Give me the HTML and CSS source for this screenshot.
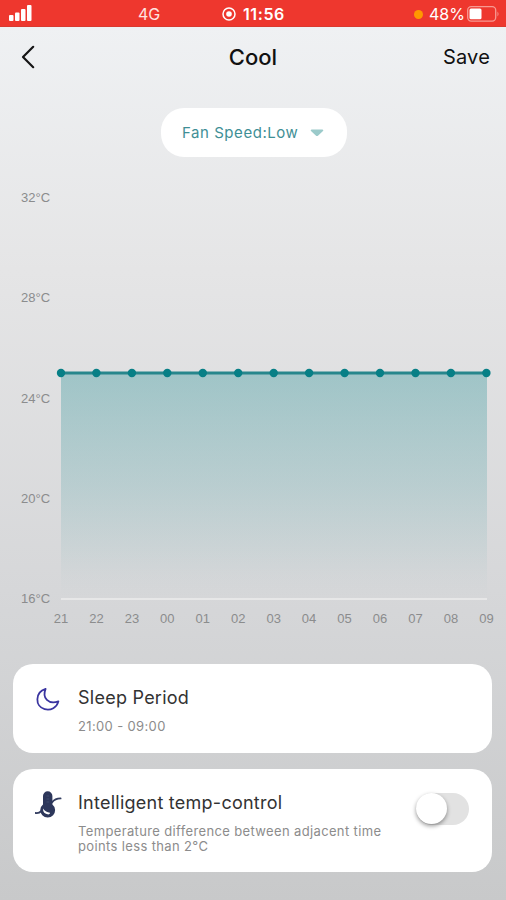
FILE: index.html
```
<!DOCTYPE html>
<html lang="en">
<head>
  <meta charset="UTF-8">
  <title>Cool</title>
  <link rel="stylesheet" href="styles.css">
</head>
<body>
  <div class="status-bar">
    <svg class="signal" width="24" height="16" viewBox="0 0 24 16" fill="#fff">
      <rect x="0" y="10" width="4.5" height="6" rx="1"/>
      <rect x="6" y="7.5" width="4.5" height="8.5" rx="1"/>
      <rect x="12" y="4" width="4.5" height="12" rx="1"/>
      <rect x="18" y="0" width="4.5" height="16" rx="1"/>
    </svg>
    <span class="network">4G</span>
    <div class="clock">
      <svg width="14" height="14" viewBox="0 0 14 14">
        <circle cx="7" cy="7" r="6" fill="none" stroke="#fff" stroke-width="1.5"/>
        <circle cx="7" cy="7" r="2.8" fill="#fff"/>
      </svg>
      <span>11:56</span>
    </div>
    <div class="power">
      <span class="mic-dot"></span>
      <span class="percent">48%</span>
      <svg width="33" height="16" viewBox="0 0 33 16">
        <rect x="0.7" y="0.7" width="28" height="14.4" rx="3.5" fill="none" stroke="#f79a93" stroke-width="1.3"/>
        <rect x="2.5" y="2.5" width="12" height="10.8" rx="1.5" fill="#fff"/>
        <path d="M30.5 5.5 Q32.5 8 30.5 10.5 Z" fill="#f79a93"/>
      </svg>
    </div>
  </div>

  <div class="header">
    <svg class="back" width="14" height="24" viewBox="0 0 14 24">
      <path d="M12.2 1.8 L2 12 L12.2 22.2" fill="none" stroke="#151515" stroke-width="2.2" stroke-linecap="round" stroke-linejoin="round"/>
    </svg>
    <span class="title">Cool</span>
    <span class="save">Save</span>
  </div>

  <div class="fan-speed">
    <span>Fan Speed:Low</span>
    <svg width="14" height="8" viewBox="0 0 14 8">
      <path d="M1.5 0.5 H12.5 Q14 1 13 2 L8.2 6.6 Q7 7.6 5.8 6.6 L1 2 Q0 1 1.5 0.5 Z" fill="#9bcaca"/>
    </svg>
  </div>

  <svg class="chart" width="506" height="460" viewBox="0 180 506 460">
    <defs>
      <linearGradient id="fill" x1="0" y1="0" x2="0" y2="1">
        <stop offset="0" stop-color="#088389" stop-opacity="0.3"/>
        <stop offset="0.5" stop-color="#088389" stop-opacity="0.16"/>
        <stop offset="0.9" stop-color="#088389" stop-opacity="0.02"/>
        <stop offset="1" stop-color="#088389" stop-opacity="0"/>
      </linearGradient>
    </defs>
    <g class="temps">
      <text x="21" y="201.5">32°C</text>
      <text x="21" y="302">28°C</text>
      <text x="21" y="402.5">24°C</text>
      <text x="21" y="503">20°C</text>
      <text x="21" y="603">16°C</text>
    </g>
    <rect x="61" y="373" width="426" height="225" fill="url(#fill)"/>
    <path d="M61 599 H487" stroke="#eceded" stroke-width="1.5"/>
    <path d="M61 373 H487" stroke="#27868c" stroke-width="3"/>
    <g fill="#077f86">
      <circle cx="61" cy="373" r="4.2"/>
      <circle cx="96.4" cy="373" r="4.2"/>
      <circle cx="131.9" cy="373" r="4.2"/>
      <circle cx="167.3" cy="373" r="4.2"/>
      <circle cx="202.8" cy="373" r="4.2"/>
      <circle cx="238.2" cy="373" r="4.2"/>
      <circle cx="273.7" cy="373" r="4.2"/>
      <circle cx="309.1" cy="373" r="4.2"/>
      <circle cx="344.6" cy="373" r="4.2"/>
      <circle cx="380" cy="373" r="4.2"/>
      <circle cx="415.5" cy="373" r="4.2"/>
      <circle cx="450.9" cy="373" r="4.2"/>
      <circle cx="486.4" cy="373" r="4.2"/>
    </g>
    <g class="hours">
      <text x="61" y="622.5">21</text>
      <text x="96.4" y="622.5">22</text>
      <text x="131.9" y="622.5">23</text>
      <text x="167.3" y="622.5">00</text>
      <text x="202.8" y="622.5">01</text>
      <text x="238.2" y="622.5">02</text>
      <text x="273.7" y="622.5">03</text>
      <text x="309.1" y="622.5">04</text>
      <text x="344.6" y="622.5">05</text>
      <text x="380" y="622.5">06</text>
      <text x="415.5" y="622.5">07</text>
      <text x="450.9" y="622.5">08</text>
      <text x="486.4" y="622.5">09</text>
    </g>
  </svg>

  <div class="cards">
    <div class="card sleep">
      <svg class="icon" width="28" height="28" viewBox="0 0 28 28">
        <path d="M9.6 3.8 C-1.2 7 -1.2 21.6 8.6 24.2 C15 25.8 20.8 22.6 22.4 16.4 C12.6 19.8 5.8 13.2 9.6 3.8 Z" fill="none" stroke="#3a35a0" stroke-width="1.8" stroke-linejoin="round"/>
      </svg>
      <div class="text">
        <div class="name">Sleep Period</div>
        <div class="detail">21:00 - 09:00</div>
      </div>
    </div>

    <div class="card smart">
      <svg class="icon" width="28" height="28" viewBox="0 0 28 28">
        <path d="M0.6 23 Q3.8 23.6 6.4 21 M17 12.4 Q20 8.4 25.6 8.4" fill="none" stroke="#333d60" stroke-width="1.8" stroke-linecap="round"/>
        <path d="M8 6 A4.7 4.7 0 0 1 17.4 6 V14.4 A7.4 7.4 0 1 1 8 14.4 Z" fill="#2d375b"/>
        <path d="M11.5 6 H14.2 M11.5 9 H14.2 M11.5 12 H14.2" stroke="#414c6e" stroke-width="1"/>
        <path d="M8 18.6 Q7.8 24 13.4 24.4 Q15.4 24 15 22.8 Q10.6 22.4 8 18.6 Z" fill="#fff"/>
      </svg>
      <div class="text">
        <div class="name">Intelligent temp-control</div>
        <div class="detail">Temperature difference between adjacent time<br>points less than 2°C</div>
      </div>
      <div class="toggle"><div class="knob"></div></div>
    </div>
  </div>
</body>
</html>
```
FILE: styles.css
```
* {
  box-sizing: border-box;
}

body {
  margin: 0;
  height: 900px;
  overflow: hidden;
  font-family: Inter, "Liberation Sans", sans-serif;
  background: linear-gradient(#eff1f3 27px, #e5e5e6 270px, #d6d7d9 590px, #c8c9ca 900px);
}

.status-bar {
  height: 27px;
  display: grid;
  grid-template-columns: 138px 84px 192px 1fr;
  align-items: center;
  background: #ee372e;
  border-bottom: 1px solid #da392f;
  color: #fff;
  font-size: 16px;
  line-height: 20px;
}

.signal {
  margin-left: 9px;
}

.network {
  color: #ffe3e0;
  padding-top: 2px;
}

.clock,
.power {
  display: flex;
  align-items: center;
  padding-top: 2px;
}

.clock {
  gap: 7px;
  font-weight: 600;
  letter-spacing: 0.6px;
}

.mic-dot {
  width: 9px;
  height: 9px;
  border-radius: 50%;
  background: #ff9800;
  margin-right: 6px;
}

.percent {
  width: 35px;
  margin-right: 3px;
}

.header {
  height: 60px;
  padding: 0 16px 0 21px;
  display: grid;
  grid-template-columns: 1fr auto 1fr;
  align-items: center;
  color: #111;
}

.title {
  font-size: 22px;
  font-weight: 450;
  margin-right: 5px;
}

.save {
  font-size: 20px;
  letter-spacing: 0.2px;
  text-align: right;
}

.fan-speed {
  width: 186px;
  height: 49px;
  margin: 21px 0 0 161px;
  padding-left: 21px;
  display: flex;
  align-items: center;
  gap: 12px;
  border-radius: 23px;
  background: #fff;
  color: #3f8f96;
  font-size: 15px;
  letter-spacing: 0.55px;
}

.chart {
  display: block;
  margin-top: 23px;
  font-family: "Liberation Sans", Arial, sans-serif;
  font-size: 13px;
  fill: #8b8c8d;
}

.hours {
  text-anchor: middle;
}

.cards {
  display: flex;
  flex-direction: column;
  gap: 16px;
  padding: 24px 14px 0 13px;
}

.card {
  display: flex;
  border-radius: 20px;
  background: #fff;
}

.sleep {
  height: 89px;
  padding: 21px 23px 0;
}

.smart {
  height: 103px;
  padding: 21px 23px 0 22px;
}

.icon {
  flex: none;
}

.text {
  margin: 1px 0 0 14px;
}

.smart .text {
  margin-left: 15px;
}

.name {
  color: #333;
  font-size: 18px;
  line-height: 24px;
  letter-spacing: 0.25px;
}

.detail {
  margin-top: 9px;
  color: #8c8c8c;
  font-size: 13px;
  line-height: 15px;
  letter-spacing: 0.36px;
  white-space: nowrap;
}

.toggle {
  flex: none;
  width: 53px;
  height: 32px;
  margin: 3px 0 0 auto;
  border-radius: 16px;
  background: #e2e2e2;
}

.knob {
  width: 31px;
  height: 31px;
  border-radius: 50%;
  background: #fff;
  box-shadow: 0 2px 4px rgba(0, 0, 0, 0.4);
}
```
